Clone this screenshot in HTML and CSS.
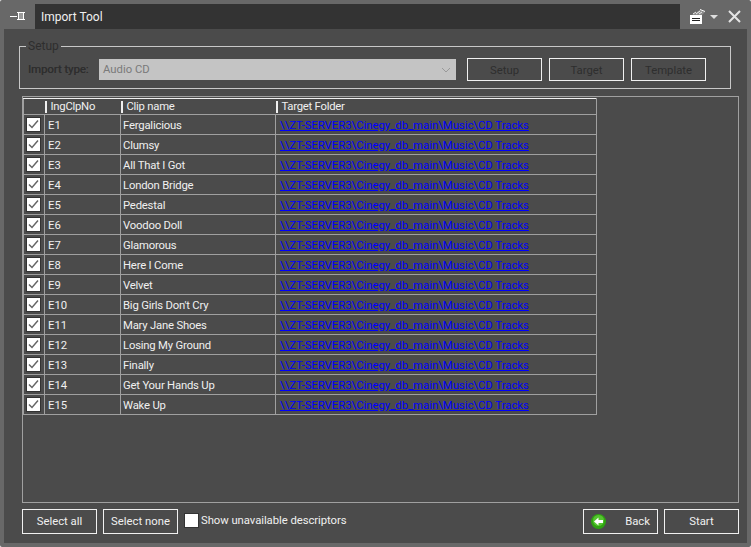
FILE: index.html
```html
<!DOCTYPE html>
<html lang="en">

<head>
  <meta charset="UTF-8">
  <meta name="viewport" content="width=device-width, initial-scale=1.0">
  <link rel="stylesheet" href="styles.css">
  <title>Import Tool</title>
</head>

<body>

  <div class="window">
    <div class="titlebar">
      <div class="pin">
        <svg width="15" height="9" viewBox="0 0 15 9">
          <path d="M0 4.5h7M7 .5h8M7 7.5h8M8.5 .5v7M13.5 .5v7" fill="none" stroke="#fff" stroke-width="1"/>
          <path d="M9 1h4v6H9z" fill="#9a9a9a"/>
        </svg>
      </div>
      <div class="title">Import Tool</div>
      <div class="title-tools">
        <svg width="15" height="15" viewBox="0 0 15 15">
          <path d="M0 6h12v9H0z" fill="#fff"/>
          <path d="M2 9.5h8M2 11.5h8" stroke="#222" stroke-width="1"/>
          <path d="M2 6l8-5 5 2-3 3z" fill="#8c8c8c"/>
          <path d="M3 5l3-2M6 5l4-3M9 5l3-2" stroke="#eee" stroke-width="1"/>
          <path d="M10 .5l5 2" fill="none" stroke="#fff" stroke-width="1"/>
        </svg>
        <svg class="caret" width="8" height="4" viewBox="0 0 8 4">
          <path d="M0 0h8L4 4z" fill="#ddd"/>
        </svg>
        <svg class="close" width="13" height="13" viewBox="0 0 13 13">
          <path d="M1 1l11 11M12 1L1 12" stroke="#e4e4e4" stroke-width="2" fill="none"/>
        </svg>
      </div>
    </div>

    <div class="content">
      <fieldset class="setup">
        <legend>Setup</legend>
        <span class="import-label">Import type:</span>
        <div class="combo">
          <span>Audio CD</span>
          <svg width="10" height="6" viewBox="0 0 10 6">
            <path d="M1 1l4 4 4-4" fill="none" stroke="#999" stroke-width="1"/>
          </svg>
        </div>
        <button class="btn btn-off">Setup</button>
        <button class="btn btn-off">Target</button>
        <button class="btn btn-off">Template</button>
      </fieldset>

      <div class="grid-box">
        <table class="clips">
          <thead>
            <tr>
              <th class="col-check"></th>
              <th class="col-no">IngClpNo</th>
              <th class="col-name">Clip name</th>
              <th class="col-folder">Target Folder</th>
            </tr>
          </thead>
          <tbody id="rows"></tbody>
        </table>
      </div>

      <div class="footer">
        <button class="btn">Select all</button>
        <button class="btn">Select none</button>
        <label class="show-check"><span class="box"></span>Show unavailable descriptors</label>
        <div class="footer-right">
          <button class="btn btn-back">
            <svg width="15" height="15" viewBox="0 0 15 15">
              <circle cx="7.5" cy="7.5" r="7.5" fill="#2fa312"/>
              <circle cx="7.5" cy="6.5" r="5.5" fill="#55c52f"/>
              <path d="M3 7.5L7.5 3.5v2.5H12v3H7.5v2.5z" fill="#fff"/>
            </svg>
            <span>Back</span>
          </button>
          <button class="btn">Start</button>
        </div>
      </div>
    </div>
  </div>

  <script src="rows.js"></script>

</body>

</html>
```

FILE: rows.js
```js
const clips = ['Fergalicious', 'Clumsy', 'All That I Got', 'London Bridge', 'Pedestal', 'Voodoo Doll', 'Glamorous',
  'Here I Come', 'Velvet', "Big Girls Don't Cry", 'Mary Jane Shoes', 'Losing My Ground', 'Finally',
  'Get Your Hands Up', 'Wake Up'];

const check = '<svg width="13" height="13" viewBox="0 0 13 13"><path d="M2 6.5l3 3 6-7" fill="none" stroke="#666" stroke-width="1.5"/></svg>';
const tbody = document.getElementById('rows');

clips.forEach((name, i) => {
  const row = document.createElement('tr');
  row.innerHTML = `<td class="cell-check"><span class="box">${check}</span></td>
    <td>E${i + 1}</td>
    <td class="cell-name">${name}</td>
    <td><a href="#">\\\\ZT-SERVER3\\Cinegy_db_main\\Music\\CD Tracks</a></td>`;
  tbody.appendChild(row);
});
```

FILE: styles.css
```css
* {
  box-sizing: border-box;
}

html,
body {
  margin: 0;
  height: 100%;
  background-color: #ffffff;
}

body {
  font-family: Roboto, "Liberation Sans", Arial, sans-serif;
  font-size: 11.3px;
  color: #f0f0f0;
}

.window {
  width: 751px;
  height: 547px;
  padding: 4px;
  display: flex;
  flex-direction: column;
  background-color: #686868;
  border-radius: 2px;
}

.titlebar {
  height: 25px;
  display: flex;
  align-items: center;
  background-color: #333333;
  flex-shrink: 0;
}

.pin {
  width: 31px;
  height: 25px;
  display: flex;
  align-items: center;
  padding-left: 6px;
  background-color: #686868;
}

.title {
  flex: 1;
  padding-left: 6px;
  font-size: 12px;
}

.title-tools {
  width: 67px;
  height: 25px;
  display: flex;
  align-items: center;
  padding-left: 10px;
  background-color: #686868;
}

.caret {
  margin-left: 5px;
}

.close {
  margin-left: 10px;
}

.content {
  flex: 1;
  background-color: #4b4b4b;
  padding: 17px 8px 9px 15px;
  display: flex;
  flex-direction: column;
  min-height: 0;
}

.setup {
  margin: 0 8px 0 0;
  height: 43px;
  flex-shrink: 0;
  border: 1px solid #c8c8c8;
  padding: 11px 0 0 8px;
  display: flex;
  align-items: flex-start;
  position: relative;
}

.setup legend {
  position: absolute;
  top: -7px;
  left: 6px;
  padding: 0 2px;
  background-color: #4b4b4b;
  color: #2e2e2e;
  line-height: 13px;
  font-size: 12px;
}

.import-label {
  width: 71px;
  margin-top: 1px;
  line-height: 21px;
  color: #2e2e2e;
  text-shadow: 0.3px 0 #2e2e2e;
  flex-shrink: 0;
}

.combo {
  width: 357px;
  height: 21px;
  margin: 1px 11px 0 0;
  background-color: #c4c4c4;
  color: #7a7a7a;
  display: flex;
  align-items: center;
  justify-content: space-between;
  padding: 0 5px 0 4px;
}

.btn {
  width: 75px;
  height: 25px;
  padding: 0;
  border: 1px solid #f0f0f0;
  background-color: #4b4b4b;
  color: #f0f0f0;
  font-family: inherit;
  font-size: 11.3px;
  flex-shrink: 0;
}

.btn-off {
  height: 23px;
  margin-right: 7px;
  padding: 1px 0 0;
  color: #2e2e2e;
}

.grid-box {
  flex: 1;
  margin: 7px 0 6px 3px;
  border: 1px solid #a0a0a0;
  min-height: 0;
}

.clips {
  border-collapse: collapse;
  table-layout: fixed;
  width: 574px;
  margin-top: 1px;
}

.clips th,
.clips td {
  height: 20px;
  padding: 2px 0 0 2px;
  border: 1px solid #a0a0a0;
  text-align: left;
  font-weight: normal;
  white-space: nowrap;
}

.clips td:nth-child(2) {
  padding-left: 3px;
}

.clips td:nth-child(4) {
  padding-left: 4px;
}

.clips td.cell-name {
  letter-spacing: -0.2px;
}

.clips th {
  height: 16px;
  border-top: 1px solid #f0f0f0;
  border-left: 0;
  border-right: 0;
  padding: 0 0 1px 6px;
  letter-spacing: -0.25px;
  background: linear-gradient(#f0f0f0, #f0f0f0) left center / 2px 12px no-repeat;
}

.clips th:first-child {
  background: none;
  border-left: 1px solid #a0a0a0;
}

.clips th:last-child {
  border-right: 1px solid #a0a0a0;
}

.col-check {
  width: 21px;
}

.col-no {
  width: 76px;
}

.col-name {
  width: 155px;
}

.clips a {
  color: #0000ff;
}

.clips td.cell-check {
  padding: 0 0 1px 3px;
}

.box {
  width: 13px;
  height: 13px;
  background-color: #ffffff;
  display: inline-block;
  outline: 1px solid #333333;
}

.box svg {
  display: block;
}

.cell-check .box {
  vertical-align: middle;
}

.footer {
  height: 25px;
  margin-left: 3px;
  display: flex;
  gap: 6px;
  flex-shrink: 0;
}

.show-check {
  display: flex;
  align-items: center;
  height: 22px;
  gap: 3px;
  margin-left: 1px;
  letter-spacing: -0.05px;
}

.footer-right {
  margin-left: auto;
  display: flex;
  gap: 6px;
}

.btn-back {
  display: flex;
  align-items: center;
  justify-content: space-between;
  padding: 0 7px;
}
```
